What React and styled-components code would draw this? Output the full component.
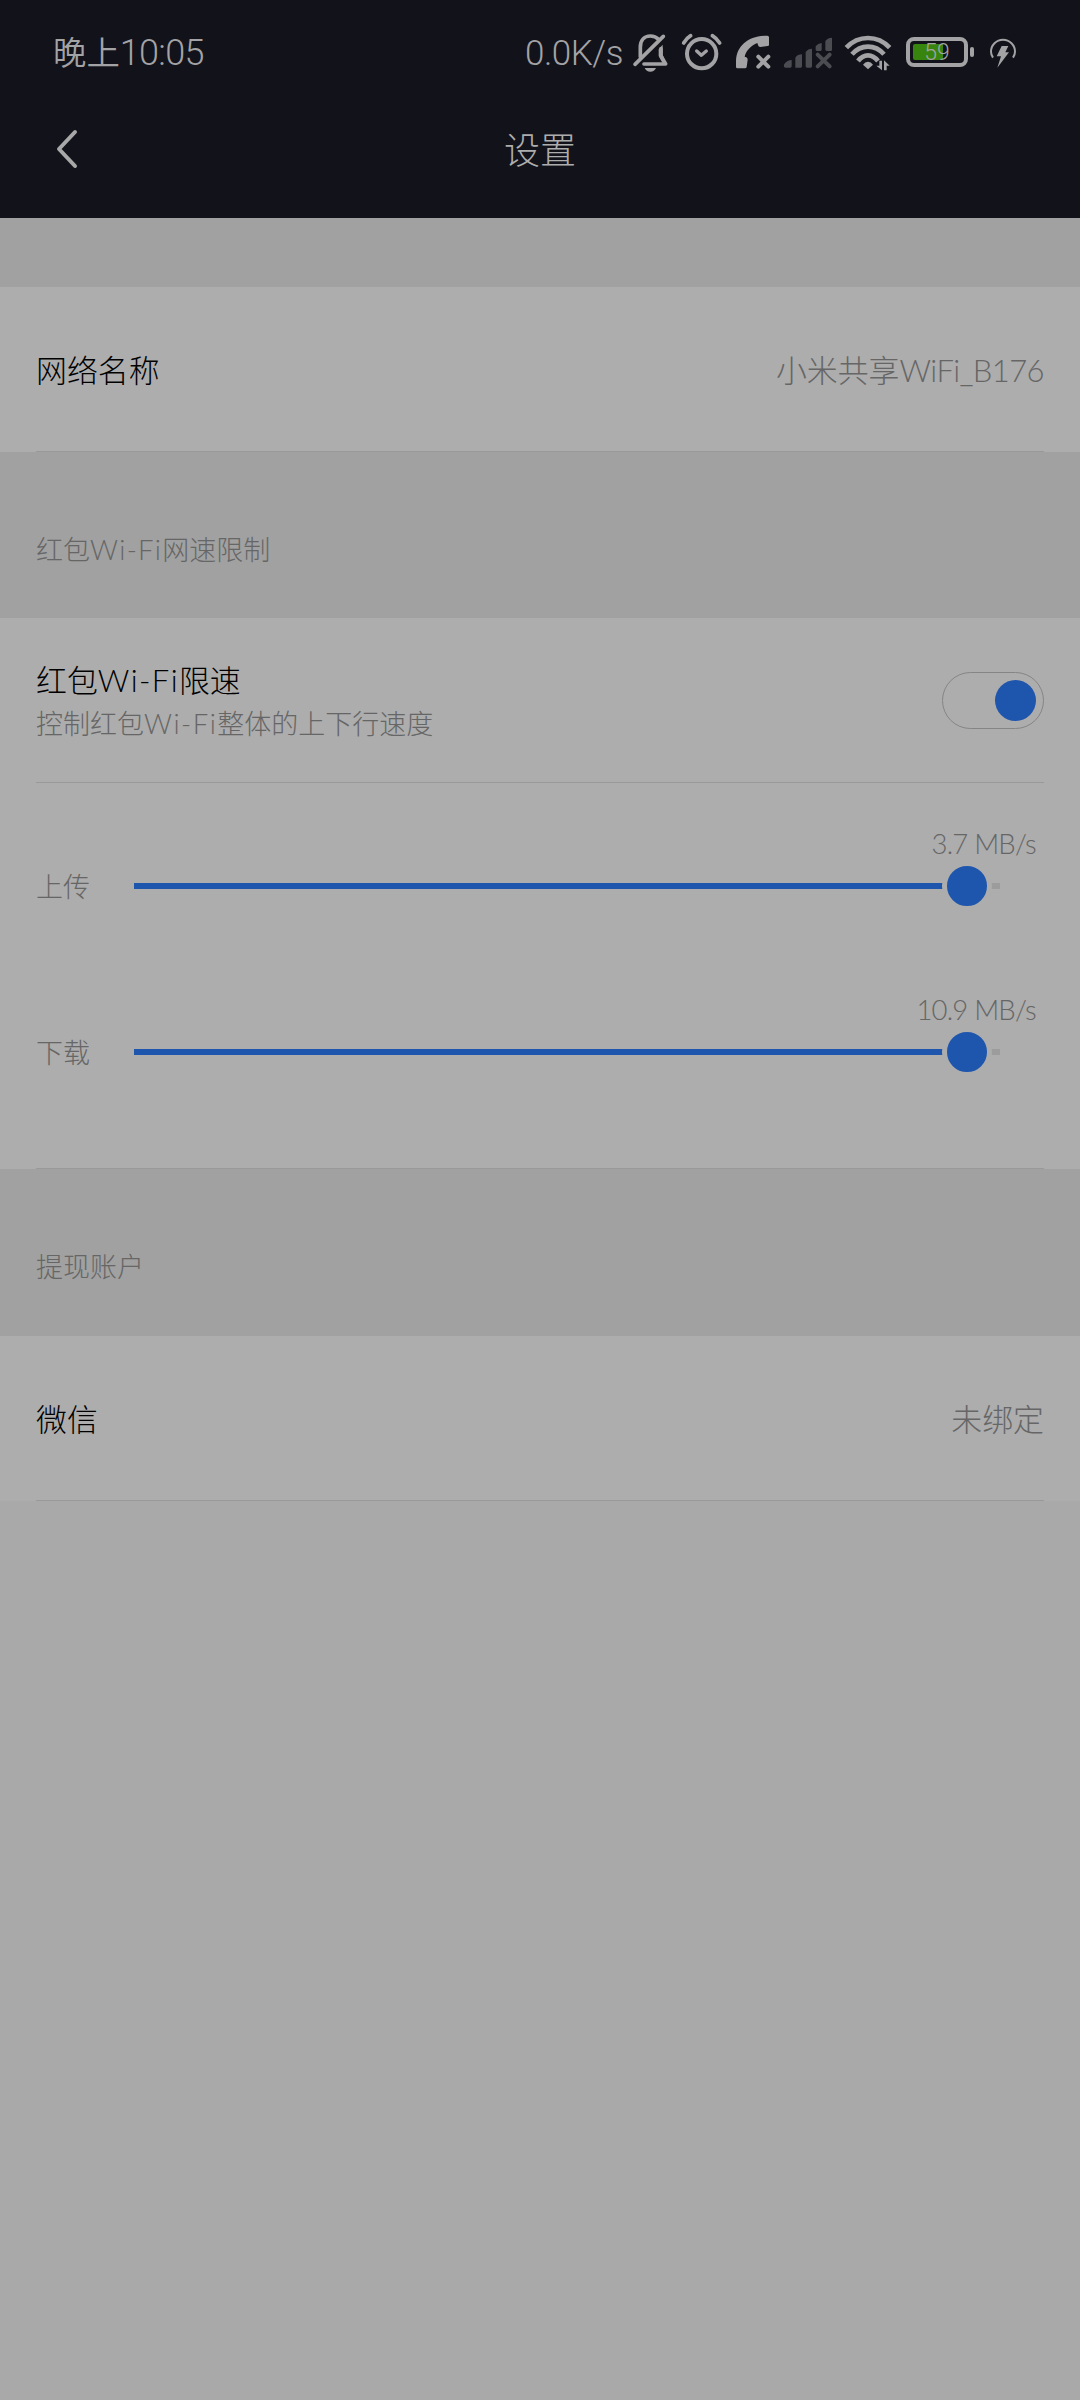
import React, { useState } from "react";
import styled, { createGlobalStyle } from "styled-components";

const limits = [
    { id: "up", label: "上传", value: "3.7 MB/s", percent: 96.2 },
    { id: "down", label: "下载", value: "10.9 MB/s", percent: 96.2 },
];

function StatusBar() {
    return (
        <StatusContainer>
            <Clock>晚上<ClockDigits>10:05</ClockDigits></Clock>
            <NetSpeed>0.0K/s</NetSpeed>
            <StatusIcon width="37" viewBox="366 0 111 210" $gap={9}>
                <g fill="none" stroke="currentColor" strokeWidth="11" strokeLinecap="round" strokeLinejoin="round">
                    <path d="M391 110V82C391 60 403 48 421 48C432 48 440 52 446 58" />
                    <path d="M375 133L460 49" />
                    <path d="M402 132H467L453 108V86" />
                </g>
                <path d="M446 88L458 74V104L468 130L456 126L446 108Z" fill="currentColor" />
                <path d="M404 144H438C435 151 429 155 421 155C413 155 407 151 404 144Z" fill="currentColor" />
            </StatusIcon>
            <StatusIcon width="43" viewBox="510 0 129 210" $gap={11}>
                <g fill="none" stroke="currentColor" strokeWidth="11" strokeLinecap="round" strokeLinejoin="round">
                    <circle cx="575" cy="101" r="44" strokeWidth="12" />
                    <path d="M521 69Q529 55 542 47M607 47Q620 55 629 69" />
                    <path d="M560 93L574 106L589 93" strokeWidth="10" />
                </g>
            </StatusIcon>
            <StatusIcon width="38" viewBox="672 0 114 210" $gap={11}>
                <path d="M682 145Q678 145 678 140V122C680 76 716 47 772 47Q777 47 777 52V74Q777 78 773 78L751 81Q745 81 744 75L742 69C724 76 708 92 704 110L709 112Q713 114 713 119L710 141Q709 145 705 145Z" fill="currentColor" />
                <path d="M745 110L775 140M775 110L745 140" stroke="currentColor" strokeWidth="12" strokeLinecap="round" />
            </StatusIcon>
            <StatusIcon width="52" viewBox="6 0 156 210" $gap={10} $dim>
                <path d="M16 143Q9 141 13 132Q22 120 35 120V139Q35 143 31 143ZM46 143V113Q53 103 66 103V139Q66 143 62 143H50ZM77 139V96Q84 86 96 86V139Q96 143 92 143H81Q77 143 77 139ZM107 90V79Q113 70 125 69V89Q125 93 121 93H110ZM136 90V63Q143 53 156 53V89Q156 93 152 93H139Z" fill="currentColor" />
                <path d="M113 104L149 139M149 104L113 139" stroke="currentColor" strokeWidth="12" strokeLinecap="round" />
            </StatusIcon>
            <StatusIcon width="49" viewBox="189 0 147 210" $gap={9}>
                <g fill="none" stroke="currentColor" strokeWidth="14">
                    <path d="M199 83Q226 54 264 54Q302 54 329 83" />
                    <path d="M216 103Q236 80 264 80Q292 80 312 103" />
                    <path d="M234 123Q247 106 264 106Q281 106 294 123" />
                </g>
                <path d="M249 134Q255 125 264 125Q273 125 279 134L264 148Z" fill="currentColor" />
                <path d="M298 122H306V151L289 137H298ZM312 151V121L329 137H320V151Z" fill="currentColor" />
            </StatusIcon>
            <Battery>
                <BatteryCase>
                    <BatteryLevel />
                    <BatteryText>59</BatteryText>
                </BatteryCase>
                <BatteryTip />
            </Battery>
            <StatusIcon width="28" viewBox="624 0 84 210" $gap={13}>
                <path d="M636 113Q630 104 630 95A36 36 0 0 1 702 95Q702 104 696 113" fill="none" stroke="currentColor" strokeWidth="6" />
                <path d="M662 78H682L673 97H684L649 143L660 109H647Z" fill="currentColor" />
            </StatusIcon>
        </StatusContainer>
    );
}

function Settings() {
    const [limited, setLimited] = useState(true);

    return (
        <Page>
            <Header>
                <StatusBar />
                <NavBar>
                    <BackButton aria-label="返回">
                        <svg width="24" height="42" viewBox="0 0 24 42">
                            <path d="M20 4L4 21L20 38" fill="none" stroke="currentColor" strokeWidth="4" strokeLinecap="round" strokeLinejoin="round" />
                        </svg>
                    </BackButton>
                    <NavTitle>设置</NavTitle>
                </NavBar>
            </Header>
            <Spacer />
            <Panel>
                <Row>
                    <Label>网络名称</Label>
                    <Value>小米共享<Latin $size={31} $spacing={-0.6}>WiFi_B176</Latin></Value>
                </Row>
                <Divider />
            </Panel>
            <SectionTitle $height={166}>红包<Latin $size={27.5} $spacing={1.3}>Wi-Fi</Latin>网速限制</SectionTitle>
            <Panel>
                <ToggleRow>
                    <div>
                        <Label>红包<Latin $size={31} $spacing={1.4}>Wi-Fi</Latin>限速</Label>
                        <Description>控制红包<Latin $size={27.5} $spacing={1.5}>Wi-Fi</Latin>整体的上下行速度</Description>
                    </div>
                    <Toggle role="switch" aria-checked={limited} $on={limited} onClick={() => setLimited(!limited)}>
                        <ToggleKnob />
                    </Toggle>
                </ToggleRow>
                <Divider />
                <Limits>
                    {limits.map((limit) => (
                        <LimitRow key={limit.id}>
                            <LimitLabel>{limit.label}</LimitLabel>
                            <LimitBody>
                                <LimitValue>{limit.value}</LimitValue>
                                <Track>
                                    <TrackFill style={{ width: limit.percent + "%" }}>
                                        <Thumb />
                                    </TrackFill>
                                </Track>
                            </LimitBody>
                        </LimitRow>
                    ))}
                </Limits>
                <Divider />
            </Panel>
            <SectionTitle $height={167}>提现账户</SectionTitle>
            <Panel>
                <Row>
                    <Label>微信</Label>
                    <Value>未绑定</Value>
                </Row>
                <Divider />
            </Panel>
        </Page>
    );
}

export default function App() {
    return (
        <>
            <GlobalStyle />
            <Settings />
        </>
    );
}

const GlobalStyle = createGlobalStyle`
  * {
    box-sizing: border-box;
  }
  body {
    margin: 0;
    background: #a9a9a9;
    font-family: Lato, "Noto Sans CJK SC", sans-serif;
    font-weight: 300;
  }
`

const Page = styled.div`
  width: 1080px;
  min-height: 2400px;
  background: #a9a9a9;
`

const Header = styled.header`
  height: 218px;
  background: #12121b;
  color: #a3a3a5;
`

const StatusContainer = styled.div`
  display: flex;
  align-items: center;
  height: 110px;
  padding: 0 63px 0 53px;
`

const Clock = styled.div`
  flex: 1;
  font-size: 33.4px;
  font-weight: 350;
  line-height: 48px;
  margin-top: -5px;
  white-space: nowrap;
`

const ClockDigits = styled.span`
  font-family: Roboto, sans-serif;
  font-size: 36px;
  letter-spacing: -0.7px;
`

const NetSpeed = styled.div`
  font-family: Roboto, sans-serif;
  font-size: 35px;
  font-weight: 350;
  line-height: 48px;
  letter-spacing: -0.5px;
  margin-top: -3px;
`

const StatusIcon = styled.svg`
  flex: none;
  height: 70px;
  margin-left: ${({ $gap }) => $gap}px;
  color: ${({ $dim }) => ($dim ? "#4b4b52" : "#a3a3a5")};
`

const Battery = styled.div`
  display: flex;
  align-items: center;
  gap: 2px;
  width: 70px;
  height: 30px;
  margin: -6px 0 0 14px;
`

const BatteryCase = styled.div`
  position: relative;
  width: 62px;
  height: 30px;
  padding: 3px;
  border: 4px solid #a3a3a5;
  border-radius: 8px;
`

const BatteryLevel = styled.div`
  width: 30px;
  height: 16px;
  border-radius: 2px 0 0 2px;
  background: #37850f;
`

const BatteryText = styled.span`
  position: absolute;
  inset: 0;
  font-family: Roboto, sans-serif;
  font-size: 23px;
  font-weight: 350;
  line-height: 24px;
  text-align: center;
`

const BatteryTip = styled.div`
  width: 4px;
  height: 10px;
  border-radius: 2px;
  background: #a3a3a5;
`

const NavBar = styled.div`
  display: grid;
  grid-template-columns: 120px 1fr 120px;
  align-items: center;
  height: 78px;
`

const BackButton = styled.button`
  display: flex;
  margin: 0 0 0 55px;
  padding: 0;
  border: 0;
  background: none;
  color: #a8a8a9;
`

const NavTitle = styled.h1`
  margin: 0;
  padding-top: 1px;
  font-size: 36px;
  font-weight: 300;
  line-height: 48px;
  text-align: center;
  color: #adadad;
`

const Spacer = styled.div`
  height: 69px;
  background: #a1a1a1;
`

const Panel = styled.section`
  background: #adadad;
`

const Row = styled.div`
  display: flex;
  align-items: center;
  justify-content: space-between;
  height: 164px;
  padding: 3px 36px 0;
`

const Divider = styled.div`
  height: 1px;
  margin: 0 36px;
  background: #999999;
`

const Label = styled.div`
  font-size: 30.9px;
  line-height: 46px;
  color: #000000;
`

const Value = styled.div`
  font-size: 30.9px;
  line-height: 46px;
  color: #666666;
`

const Latin = styled.span`
  font-size: ${({ $size }) => $size}px;
  letter-spacing: ${({ $spacing }) => $spacing}px;
`

const SectionTitle = styled.h2`
  height: ${({ $height }) => $height}px;
  margin: 0;
  padding: 78px 36px 0;
  background: #a1a1a1;
  font-size: 27px;
  font-weight: 300;
  line-height: 40px;
  color: #666666;
`

const ToggleRow = styled.div`
  display: flex;
  align-items: center;
  justify-content: space-between;
  height: 164px;
  padding: 0 36px;
`

const Description = styled.div`
  font-size: 27px;
  line-height: 40px;
  color: #666666;
`

const Toggle = styled.button`
  display: flex;
  align-items: center;
  justify-content: ${({ $on }) => ($on ? "flex-end" : "flex-start")};
  width: 102px;
  height: 57px;
  padding: 0 7px;
  border: 1px solid #858585;
  border-radius: 29px;
  background: none;
`

const ToggleKnob = styled.span`
  width: 41px;
  height: 41px;
  border-radius: 50%;
  background: #1f56ad;
`

const Limits = styled.div`
  height: 385px;
  padding: 37px 36px 0;
`

const LimitRow = styled.div`
  display: flex;
  height: 166px;
`

const LimitLabel = styled.div`
  width: 98px;
  padding-top: 47px;
  font-size: 27px;
  line-height: 40px;
  color: #666666;
`

const LimitBody = styled.div`
  flex: 1;
`

const LimitValue = styled.div`
  height: 63px;
  padding: 4px 8px 0 0;
  font-size: 27.5px;
  line-height: 40px;
  letter-spacing: -0.8px;
  text-align: right;
  color: #666666;
`

const Track = styled.div`
  width: 866px;
  height: 6px;
  background: #9c9c9c;
`

const TrackFill = styled.div`
  display: flex;
  align-items: center;
  justify-content: flex-end;
  height: 6px;
  background: #1f56ad;
`

const Thumb = styled.span`
  flex: none;
  width: 50px;
  height: 50px;
  margin-right: -25px;
  border: 5px solid #adadad;
  border-radius: 50%;
  background: #1f56ad;
`
